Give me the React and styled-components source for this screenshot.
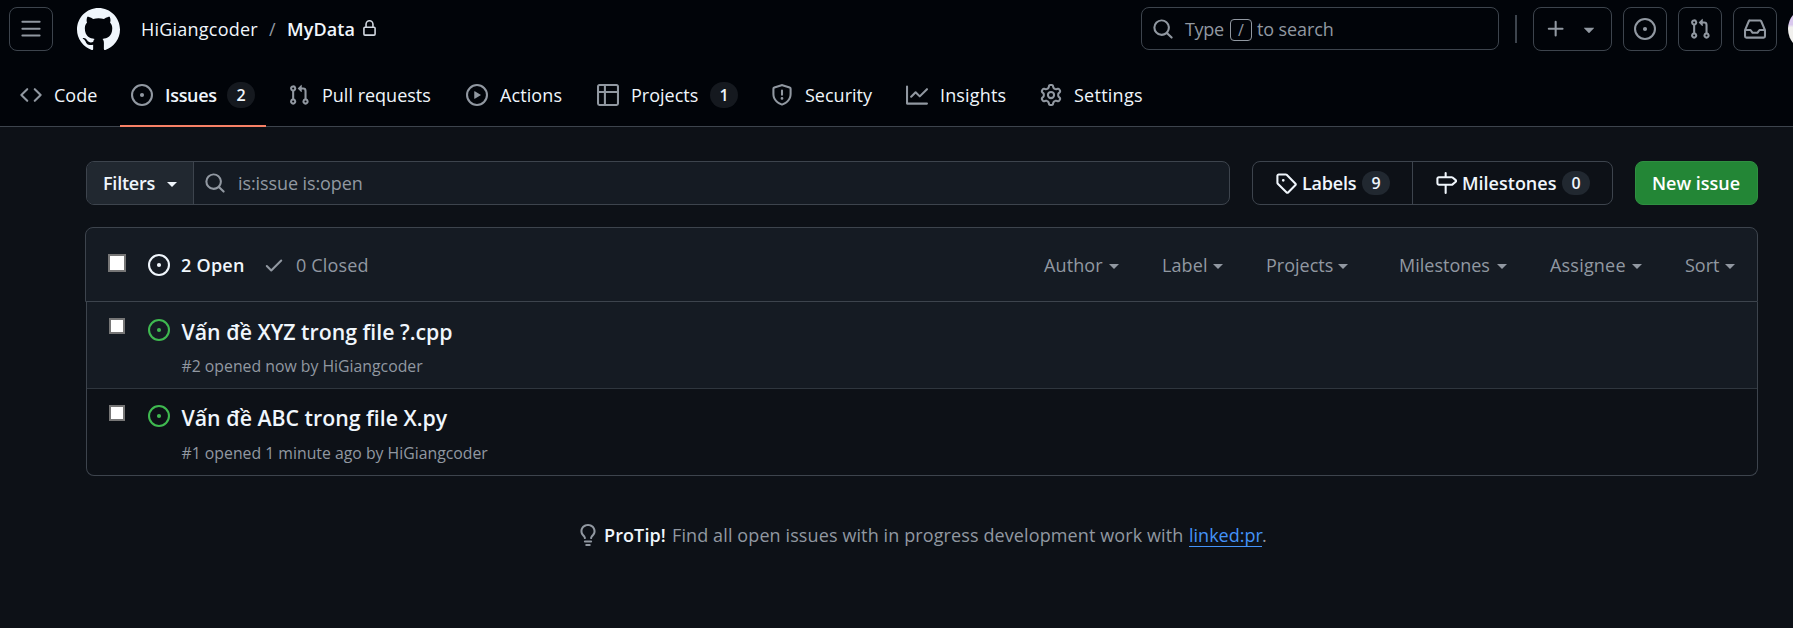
import React from 'react';
import styled, { createGlobalStyle, css } from 'styled-components';

const GlobalStyle = createGlobalStyle`
  *, *::before, *::after { box-sizing: border-box; }
  body {
    margin: 0;
    min-height: 100vh;
    overflow: hidden;
    background: #0d1117;
    color: #f0f6fc;
    font-family: "Open Sans", "Noto Sans", sans-serif;
    font-size: 18px;
    line-height: 28px;
  }
`;

const ICONS = {
  menu: 'M1 2.75A.75.75 0 0 1 1.75 2h12.5a.75.75 0 0 1 0 1.5H1.75A.75.75 0 0 1 1 2.75Zm0 5A.75.75 0 0 1 1.75 7h12.5a.75.75 0 0 1 0 1.5H1.75A.75.75 0 0 1 1 7.75ZM1.75 12h12.5a.75.75 0 0 1 0 1.5H1.75a.75.75 0 0 1 0-1.5Z',
  github: 'M8 0c4.42 0 8 3.58 8 8a8.013 8.013 0 0 1-5.45 7.59c-.4.08-.55-.17-.55-.38 0-.27.01-1.13.01-2.2 0-.75-.25-1.23-.54-1.48 1.78-.2 3.65-.88 3.65-3.95 0-.88-.31-1.59-.82-2.15.08-.2.36-1.02-.08-2.12 0 0-.67-.22-2.2.82-.64-.18-1.32-.27-2-.27-.68 0-1.36.09-2 .27-1.53-1.03-2.2-.82-2.2-.82-.44 1.1-.16 1.92-.08 2.12-.51.56-.82 1.28-.82 2.15 0 3.06 1.86 3.75 3.64 3.95-.23.2-.44.55-.51 1.07-.46.21-1.61.55-2.33-.66-.15-.24-.6-.83-1.23-.82-.67.01-.27.38.01.53.34.19.73.9.82 1.13.16.45.68 1.31 2.69.94 0 .67.01 1.3.01 1.49 0 .21-.15.45-.55.38A7.995 7.995 0 0 1 0 8c0-4.42 3.58-8 8-8Z',
  lock: 'M4 4a4 4 0 0 1 8 0v2h.25c.966 0 1.75.784 1.75 1.75v5.5A1.75 1.75 0 0 1 12.25 15h-8.5A1.75 1.75 0 0 1 2 13.25v-5.5C2 6.784 2.784 6 3.75 6H4Zm8.25 3.5h-8.5a.25.25 0 0 0-.25.25v5.5c0 .138.112.25.25.25h8.5a.25.25 0 0 0 .25-.25v-5.5a.25.25 0 0 0-.25-.25ZM10.5 6V4a2.5 2.5 0 1 0-5 0v2Z',
  code: 'm11.28 3.22 4.25 4.25a.75.75 0 0 1 0 1.06l-4.25 4.25a.749.749 0 0 1-1.275-.326.749.749 0 0 1 .215-.734L13.94 8l-3.72-3.72a.749.749 0 0 1 .326-1.275.749.749 0 0 1 .734.215Zm-6.56 0a.751.751 0 0 1 1.042.018.751.751 0 0 1 .018 1.042L2.06 8l3.72 3.72a.749.749 0 0 1-.326 1.275.749.749 0 0 1-.734-.215L.47 8.53a.75.75 0 0 1 0-1.06Z',
  issue: 'M8 9.5a1.5 1.5 0 1 0 0-3 1.5 1.5 0 0 0 0 3Z M8 0a8 8 0 1 1 0 16A8 8 0 0 1 8 0ZM1.5 8a6.5 6.5 0 1 0 13 0 6.5 6.5 0 0 0-13 0Z',
  pull: 'M1.5 3.25a2.25 2.25 0 1 1 3 2.122v5.256a2.251 2.251 0 1 1-1.5 0V5.372A2.25 2.25 0 0 1 1.5 3.25Zm5.677-.177L9.573.677A.25.25 0 0 1 10 .854V2.5h1A2.5 2.5 0 0 1 13.5 5v5.628a2.251 2.251 0 1 1-1.5 0V5a1 1 0 0 0-1-1h-1v1.646a.25.25 0 0 1-.427.177L7.177 3.427a.25.25 0 0 1 0-.354ZM3.75 2.5a.75.75 0 1 0 0 1.5.75.75 0 0 0 0-1.5Zm0 9.5a.75.75 0 1 0 0 1.5.75.75 0 0 0 0-1.5Zm8.25.75a.75.75 0 1 0 1.5 0 .75.75 0 0 0-1.5 0Z',
  play: 'M8 0a8 8 0 1 1 0 16A8 8 0 0 1 8 0ZM1.5 8a6.5 6.5 0 1 0 13 0 6.5 6.5 0 0 0-13 0Zm4.879-2.773 4.264 2.559a.25.25 0 0 1 0 .428l-4.264 2.559A.25.25 0 0 1 6 10.559V5.442a.25.25 0 0 1 .379-.215Z',
  table: 'M0 1.75C0 .784.784 0 1.75 0h12.5C15.216 0 16 .784 16 1.75v12.5A1.75 1.75 0 0 1 14.25 16H1.75A1.75 1.75 0 0 1 0 14.25ZM6.5 6.5v8h7.75a.25.25 0 0 0 .25-.25V6.5Zm8-1.5V1.75a.25.25 0 0 0-.25-.25H6.5V5Zm-13 1.5v7.75c0 .138.112.25.25.25H5v-8ZM5 5V1.5H1.75a.25.25 0 0 0-.25.25V5Z',
  shield: 'M7.467.133a1.748 1.748 0 0 1 1.066 0l5.25 1.68A1.75 1.75 0 0 1 15 3.48V7c0 1.566-.32 3.182-1.303 4.682-.983 1.498-2.585 2.813-5.032 3.855a1.697 1.697 0 0 1-1.33 0c-2.447-1.042-4.049-2.357-5.032-3.855C1.32 10.182 1 8.566 1 7V3.48a1.75 1.75 0 0 1 1.217-1.667Zm.61 1.429a.25.25 0 0 0-.153 0l-5.25 1.68a.25.25 0 0 0-.174.238V7c0 1.358.275 2.666 1.057 3.86.784 1.194 2.121 2.34 4.366 3.297a.196.196 0 0 0 .154 0c2.245-.956 3.582-2.104 4.366-3.298C13.225 9.666 13.5 8.36 13.5 7V3.48a.251.251 0 0 0-.174-.237l-5.25-1.68ZM8.75 4.75v3a.75.75 0 0 1-1.5 0v-3a.75.75 0 0 1 1.5 0ZM9 10.5a1 1 0 1 1-2 0 1 1 0 0 1 2 0Z',
  graph: 'M1.5 1.75V13.5h13.75a.75.75 0 0 1 0 1.5H.75a.75.75 0 0 1-.75-.75V1.75a.75.75 0 0 1 1.5 0Zm14.28 2.53-5.25 5.25a.75.75 0 0 1-1.06 0L7 7.06 4.28 9.78a.751.751 0 0 1-1.042-.018.751.751 0 0 1-.018-1.042l3.25-3.25a.75.75 0 0 1 1.06 0L10 7.94l4.72-4.72a.751.751 0 0 1 1.042.018.751.751 0 0 1 .018 1.042Z',
  gear: 'M8 0a8.2 8.2 0 0 1 .701.031C9.444.095 9.99.645 10.16 1.29l.288 1.107c.018.066.079.158.212.224.231.114.454.243.668.386.123.082.233.09.299.071l1.103-.303c.644-.176 1.392.021 1.82.63.27.385.506.792.704 1.218.315.675.111 1.422-.364 1.891l-.814.806c-.049.048-.098.147-.088.294.016.257.016.515 0 .772-.01.147.038.246.088.294l.814.806c.475.469.679 1.216.364 1.891a7.977 7.977 0 0 1-.704 1.217c-.428.61-1.176.807-1.82.63l-1.102-.302c-.067-.019-.177-.011-.3.071a5.909 5.909 0 0 1-.668.386c-.133.066-.194.158-.211.224l-.29 1.106c-.168.646-.715 1.196-1.458 1.26a8.006 8.006 0 0 1-1.402 0c-.743-.064-1.289-.614-1.458-1.26l-.289-1.106c-.018-.066-.079-.158-.212-.224a5.738 5.738 0 0 1-.668-.386c-.123-.082-.233-.09-.299-.071l-1.103.303c-.644.176-1.392-.021-1.82-.63a8.12 8.12 0 0 1-.704-1.218c-.315-.675-.111-1.422.363-1.891l.815-.806c.05-.048.098-.147.088-.294a6.214 6.214 0 0 1 0-.772c.01-.147-.038-.246-.088-.294l-.815-.806C.635 6.045.431 5.298.746 4.623a7.92 7.92 0 0 1 .704-1.217c.428-.61 1.176-.807 1.82-.63l1.102.302c.067.019.177.011.3-.071.214-.143.437-.272.668-.386.133-.066.194-.158.211-.224l.29-1.106C6.009.645 6.556.095 7.299.03 7.53.01 7.764 0 8 0Zm-.571 1.525c-.036.003-.108.036-.137.146l-.289 1.105c-.147.561-.549.967-.998 1.189-.173.086-.34.183-.5.29-.417.278-.97.423-1.529.27l-1.103-.303c-.109-.03-.175.016-.195.045-.22.312-.412.644-.573.99-.014.031-.021.11.059.19l.815.806c.411.406.562.957.53 1.456a4.709 4.709 0 0 0 0 .582c.032.499-.119 1.05-.53 1.456l-.815.806c-.081.08-.073.159-.059.19.162.346.353.677.573.989.02.03.085.076.195.046l1.102-.303c.56-.153 1.113-.008 1.53.27.161.107.328.204.501.29.447.222.85.629.997 1.189l.289 1.105c.029.109.101.143.137.146a6.6 6.6 0 0 0 1.142 0c.036-.003.108-.036.137-.146l.289-1.105c.147-.561.549-.967.998-1.189.173-.086.34-.183.5-.29.417-.278.97-.423 1.529-.27l1.103.303c.109.029.175-.016.195-.045.22-.313.411-.644.573-.99.014-.031.021-.11-.059-.19l-.815-.806c-.411-.406-.562-.957-.53-1.456a4.709 4.709 0 0 0 0-.582c-.032-.499.119-1.05.53-1.456l.815-.806c.081-.08.073-.159.059-.19a6.464 6.464 0 0 0-.573-.989c-.02-.03-.085-.076-.195-.046l-1.102.303c-.56.153-1.113.008-1.53-.27a4.44 4.44 0 0 0-.501-.29c-.447-.222-.85-.629-.997-1.189l-.289-1.105c-.029-.11-.101-.143-.137-.146a6.6 6.6 0 0 0-1.142 0ZM11 8a3 3 0 1 1-6 0 3 3 0 0 1 6 0ZM9.5 8a1.5 1.5 0 1 0-3.001.001A1.5 1.5 0 0 0 9.5 8Z',
  search: 'M10.68 11.74a6 6 0 0 1-7.922-8.982 6 6 0 0 1 8.982 7.922l3.04 3.04a.749.749 0 0 1-.326 1.275.749.749 0 0 1-.734-.215ZM11.5 7a4.499 4.499 0 1 0-8.997 0A4.499 4.499 0 0 0 11.5 7Z',
  plus: 'M7.75 2a.75.75 0 0 1 .75.75V7h4.25a.75.75 0 0 1 0 1.5H8.5v4.25a.75.75 0 0 1-1.5 0V8.5H2.75a.75.75 0 0 1 0-1.5H7V2.75A.75.75 0 0 1 7.75 2Z',
  triangle: 'm4.427 7.427 3.396 3.396a.25.25 0 0 0 .354 0l3.396-3.396A.25.25 0 0 0 11.396 7H4.604a.25.25 0 0 0-.177.427Z',
  inbox: 'M2.8 2.06A1.75 1.75 0 0 1 4.41 1h7.18c.7 0 1.333.417 1.61 1.06l2.74 6.395c.04.093.06.194.06.295v4.5A1.75 1.75 0 0 1 14.25 15H1.75A1.75 1.75 0 0 1 0 13.25v-4.5c0-.101.02-.202.06-.295Zm1.61.44a.25.25 0 0 0-.23.152L1.887 8H4.75a.75.75 0 0 1 .6.3L6.625 10h2.75l1.275-1.7a.75.75 0 0 1 .6-.3h2.863L11.82 2.652a.25.25 0 0 0-.23-.152Zm10.09 7h-2.875l-1.275 1.7a.75.75 0 0 1-.6.3h-3.5a.75.75 0 0 1-.6-.3L4.375 9.5H1.5v3.75c0 .138.112.25.25.25h12.5a.25.25 0 0 0 .25-.25Z',
  tag: 'M1 7.775V2.75C1 1.784 1.784 1 2.75 1h5.025c.464 0 .91.184 1.238.513l6.25 6.25a1.75 1.75 0 0 1 0 2.474l-5.026 5.026a1.75 1.75 0 0 1-2.474 0l-6.25-6.25A1.752 1.752 0 0 1 1 7.775Zm1.5 0c0 .066.026.13.073.177l6.25 6.25a.25.25 0 0 0 .354 0l5.025-5.025a.25.25 0 0 0 0-.354l-6.25-6.25a.25.25 0 0 0-.177-.073H2.75a.25.25 0 0 0-.25.25ZM6 5a1 1 0 1 1 0 2 1 1 0 0 1 0-2Z',
  milestone: 'M7.75 0a.75.75 0 0 1 .75.75V3h3.634c.414 0 .814.147 1.13.414l2.07 1.75a1.75 1.75 0 0 1 0 2.672l-2.07 1.75a1.75 1.75 0 0 1-1.13.414H8.5v5.25a.75.75 0 0 1-1.5 0V10H2.75A1.75 1.75 0 0 1 1 8.25v-3.5C1 3.784 1.784 3 2.75 3H7V.75A.75.75 0 0 1 7.75 0Zm4.384 8.5a.25.25 0 0 0 .161-.06l2.07-1.75a.248.248 0 0 0 0-.38l-2.07-1.75a.25.25 0 0 0-.161-.06H2.75a.25.25 0 0 0-.25.25v3.5c0 .138.112.25.25.25h9.384Z',
  check: 'M13.78 4.22a.75.75 0 0 1 0 1.06l-7.25 7.25a.75.75 0 0 1-1.06 0L2.22 9.28a.751.751 0 0 1 .018-1.042.751.751 0 0 1 1.042-.018L6 10.94l6.72-6.72a.75.75 0 0 1 1.06 0Z',
  bulb: 'M8 1.5c-2.363 0-4 1.69-4 3.75 0 .984.424 1.625.984 2.304l.214.253c.223.264.47.556.673.848.284.411.537.896.621 1.49a.75.75 0 0 1-1.484.211c-.04-.282-.163-.547-.37-.847a8.456 8.456 0 0 0-.542-.68c-.084-.1-.173-.205-.268-.32C3.201 7.75 2.5 6.766 2.5 5.25 2.5 2.31 4.863 0 8 0s5.5 2.31 5.5 5.25c0 1.516-.701 2.5-1.328 3.259-.095.115-.184.22-.268.319-.207.245-.383.453-.541.681-.208.3-.33.565-.37.847a.751.751 0 0 1-1.485-.212c.084-.593.337-1.078.621-1.489.203-.292.45-.584.673-.848.075-.088.147-.173.213-.253.561-.679.985-1.32.985-2.304 0-2.06-1.637-3.75-4-3.75ZM5.75 12h4.5a.75.75 0 0 1 0 1.5h-4.5a.75.75 0 0 1 0-1.5ZM6 15.25a.75.75 0 0 1 .75-.75h2.5a.75.75 0 0 1 0 1.5h-2.5a.75.75 0 0 1-.75-.75Z',
};

const Svg = styled.svg`
  display: block;
  flex: none;
  width: ${(p) => p.$size}px;
  height: ${(p) => p.$size}px;
  fill: ${(p) => p.$color};
`;

const Icon = ({ name, size = 22, color = '#9198a1', className }) => (
  <Svg viewBox="0 0 16 16" $size={size} $color={color} className={className} aria-hidden="true">
    <path fillRule="evenodd" d={ICONS[name]} />
  </Svg>
);

/* Text run with a fixed measure, so that neighbours keep their place */
const Label = styled.span`
  display: block;
  flex: none;
  width: ${(p) => p.$w}px;
  text-align: left;
  white-space: nowrap;
  letter-spacing: ${(p) => p.$track || 0}px;
  font-weight: ${(p) => (p.$bold ? 600 : 400)};
`;

const Header = styled.header`
  height: 127px;
  background: #010409;
  overflow: hidden;
`;

const TopBar = styled.div`
  display: flex;
  align-items: center;
  height: 44px;
  margin-top: 7px;
  padding-left: 9px;
`;

const SquareButton = styled.button`
  display: flex;
  flex: none;
  align-items: center;
  justify-content: center;
  width: 44px;
  height: 44px;
  padding: 0;
  background: transparent;
  border: 1px solid #3d444d;
  border-radius: 8px;
`;

const Logo = styled(Icon)`
  margin: 0 21px 0 24px;
`;

const Crumbs = styled.nav`
  display: flex;
  flex: 1;
  align-items: center;
`;

const Slash = styled.span`
  width: 29px;
  padding-left: 11px;
  color: #9198a1;
`;

const LockIcon = styled(Icon)`
  margin: 0 0 1px 6px;
`;

const SearchBox = styled.div`
  display: flex;
  flex: none;
  align-items: center;
  width: 358px;
  height: 43px;
  margin-bottom: 1px;
  padding-left: 10px;
  border: 1px solid #3d444d;
  border-radius: 8px;
  color: #9198a1;

  ${Label} { margin-left: 11px; }
  kbd + ${Label} { margin-left: 5px; }
`;

const Key = styled.kbd`
  display: flex;
  align-items: center;
  justify-content: center;
  width: 22px;
  height: 22px;
  margin-left: 6px;
  margin-top: 2px;
  border: 1px solid #9198a1;
  border-radius: 4px;
  font: 16px/20px "Open Sans", sans-serif;
`;

const Divider = styled.span`
  flex: none;
  width: 2px;
  height: 28px;
  margin: 0 16px;
  background: #3d444d;
`;

const HeaderActions = styled.div`
  display: flex;
  flex: none;
  align-items: center;
  gap: 11px;
  width: 260px;
`;

const CreateButton = styled(SquareButton)`
  width: 79px;
  gap: 11px;
`;

const Avatar = styled.span`
  flex: none;
  width: 44px;
  height: 44px;
  border-radius: 50%;
  background: linear-gradient(#d9c8ee 40%, #f1f0ee 46%);
`;

const RepoTabs = styled.nav`
  display: flex;
  gap: 11px;
  height: 76px;
  padding-left: 9px;
  border-bottom: 1px solid #3d444d;
`;

const Tab = styled.a`
  display: flex;
  position: relative;
  align-items: center;
  height: 64px;
  margin-top: 12px;
  padding: 0 11px;
  gap: 12px;

  ${(p) => p.$active && css`
    &::after {
      content: "";
      position: absolute;
      right: 0;
      bottom: 0;
      left: 0;
      height: 2px;
      background: #f78166;
    }
  `}
`;

const Counter = styled.span`
  display: flex;
  flex: none;
  align-items: center;
  justify-content: center;
  width: ${(p) => p.$w}px;
  height: ${(p) => (p.$small ? 24 : 26)}px;
  border-radius: 13px;
  background: ${(p) => (p.$small ? '#212830' : '#15191f')};
  font-size: 16px;
  line-height: 24px;
  font-weight: 600;
`;

const Main = styled.main`
  width: 1673px;
  margin-left: 85px;
  padding-top: 34px;
`;

const Toolbar = styled.div`
  display: flex;
  height: 44px;
  padding-left: 1px;
`;

const FilterBar = styled.div`
  display: flex;
  flex: none;
  width: 1144px;
  border: 1px solid #3d444d;
  border-radius: 8px;
  background: #151b23;
  overflow: hidden;
`;

const FilterButton = styled.button`
  display: flex;
  align-items: center;
  width: 107px;
  padding: 0 0 0 16px;
  border: 0;
  border-right: 1px solid #3d444d;
  background: #212830;
  color: #f0f6fc;
  font: inherit;
`;

const Caret = styled.span`
  flex: none;
  width: 0;
  height: 0;
  margin-top: ${(p) => p.$drop || 0}px;
  border: 5.5px solid transparent;
  border-top-color: currentColor;
  border-bottom: 0;
`;

const Query = styled.div`
  display: flex;
  align-items: center;
  gap: 12px;
  padding-left: 10px;
  color: #9198a1;
`;

const ButtonGroup = styled.div`
  display: flex;
  width: 361px;
  margin: 0 22px;
  border: 1px solid #3d444d;
  border-radius: 8px;
`;

const GroupLink = styled.a`
  display: flex;
  flex: ${(p) => (p.$grow ? 1 : 'none')};
  align-items: center;
  gap: 5px;
  width: 159px;
  padding-left: 22px;

  & + & { border-left: 1px solid #3d444d; }
`;

const NewIssue = styled.button`
  display: flex;
  flex: none;
  align-items: center;
  width: 123px;
  height: 44px;
  padding: 0 0 0 16px;
  border: 1px solid #2f8f41;
  border-radius: 8px;
  background: #238636;
  color: #fff;
  font: inherit;
`;

const ListHeader = styled.div`
  display: flex;
  align-items: center;
  height: 75px;
  margin-top: 22px;
  padding: 1px 22px 0 22px;
  border: 1px solid #3d444d;
  border-radius: 8px 8px 0 0;
  background: #151b23;
  color: #9198a1;
`;

const Checkbox = styled.span`
  flex: none;
  width: ${(p) => p.$size}px;
  height: ${(p) => p.$size}px;
  border: 2px solid #767676;
  background: #fff;
`;

const HeaderCheckbox = styled(Checkbox)`
  margin: -4px 22px 0 0;
`;

const StateLink = styled.a`
  display: flex;
  align-items: center;
  gap: ${(p) => p.$gap}px;
  margin-right: 19px;
  color: ${(p) => (p.$active ? '#f0f6fc' : '#9198a1')};
`;

const Menus = styled.div`
  display: flex;
  margin-left: auto;
`;

const MenuItem = styled.span`
  display: flex;
  align-items: center;
  gap: 5px;
  margin-left: ${(p) => p.$before}px;
`;

const Rows = styled.div`
  margin-left: 1px;
  border: 1px solid #3d444d;
  border-top: 0;
  border-radius: 0 0 8px 8px;
  overflow: hidden;
`;

const Row = styled.article`
  display: flex;
  align-items: flex-start;
  height: 87px;
  padding: 17px 0 0 22px;
  background: ${(p) => (p.$hover ? '#151b23' : 'transparent')};

  & + & { height: 86px; padding-top: 16px; }
  &:first-child { border-bottom: 1px solid #2f363e; }
`;

const RowCheckbox = styled(Checkbox)`
  margin: -1px 23px 0 0;

  ${Row} + ${Row} & { margin-top: 0; }
`;

const RowText = styled.div`
  margin-left: 11.5px;
`;

const Title = styled.h3`
  margin: 0;
  font-size: 21.3px;
  line-height: 26px;
  font-weight: 600;
  white-space: nowrap;
`;

const Meta = styled.p`
  margin: 9px 0 0;
  color: #9198a1;
  font-size: 15.8px;
  line-height: 24px;
  white-space: nowrap;

  ${Row} + ${Row} & { margin-top: 10px; }
`;

const ProTip = styled.footer`
  display: flex;
  align-items: center;
  margin: 45px 0 0 492px;
  color: #9198a1;

  ${Label} { margin-left: 5px; }
`;

const Strong = styled(Label)`
  color: #f0f6fc;
`;

const TipLink = styled.a`
  display: block;
  width: 73px;
  height: 24px;
  margin-left: 6px;
  color: #4493f8;
  border-bottom: 1px solid #4493f8;
  line-height: 24px;
  white-space: nowrap;
`;

const TABS = [
  { icon: 'code', text: 'Code', w: 44 },
  { icon: 'issue', text: 'Issues', w: 50, track: -0.3, count: 2, active: true },
  { icon: 'pull', text: 'Pull requests', w: 111 },
  { icon: 'play', text: 'Actions', w: 64, track: 0.1 },
  { icon: 'table', text: 'Projects', w: 67, count: 1 },
  { icon: 'shield', text: 'Security', w: 68 },
  { icon: 'graph', text: 'Insights', w: 67, track: 0.15 },
  { icon: 'gear', text: 'Settings', w: 69, track: 0.25 },
];

const MENUS = [
  { text: 'Author', w: 60, before: 0, track: 0.12 },
  { text: 'Label', w: 46, before: 43, track: 0.1 },
  { text: 'Projects', w: 67, before: 43 },
  { text: 'Milestones', w: 93, before: 51 },
  { text: 'Assignee', w: 77, before: 43, track: 0.2 },
  { text: 'Sort', w: 35, before: 43 },
];

const ISSUES = [
  { title: 'Vấn đề XYZ trong file ?.cpp', meta: '#2 opened now by HiGiangcoder', hover: true },
  { title: 'Vấn đề ABC trong file X.py', meta: '#1 opened 1 minute ago by HiGiangcoder' },
];

export default function App() {
  return (
    <>
      <GlobalStyle />
      <Header>
        <TopBar>
          <SquareButton aria-label="Menu"><Icon name="menu" /></SquareButton>
          <Logo name="github" size={43} color="#f0f6fc" />
          <Crumbs>
            <Label $w={117} $track={0.22}>HiGiangcoder</Label>
            <Slash>/</Slash>
            <Label $w={68} $track={0.1} $bold>MyData</Label>
            <LockIcon name="lock" size={17} color="#d1d7e0" />
          </Crumbs>
          <SearchBox>
            <Icon name="search" />
            <Label $w={39} $track={-0.3}>Type</Label>
            <Key>/</Key>
            <Label $w={76} $track={-0.1}>to search</Label>
          </SearchBox>
          <Divider />
          <HeaderActions>
            <CreateButton aria-label="Create new">
              <Icon name="plus" />
              <Icon name="triangle" />
            </CreateButton>
            <SquareButton aria-label="Issues"><Icon name="issue" /></SquareButton>
            <SquareButton aria-label="Pull requests"><Icon name="pull" /></SquareButton>
            <SquareButton aria-label="Inbox"><Icon name="inbox" /></SquareButton>
            <Avatar />
          </HeaderActions>
        </TopBar>
        <RepoTabs>
          {TABS.map((t) => (
            <Tab key={t.text} $active={t.active}>
              <Icon name={t.icon} />
              <Label $w={t.w} $track={t.track} $bold={t.active}>{t.text}</Label>
              {t.count && <Counter $w={28}>{t.count}</Counter>}
            </Tab>
          ))}
        </RepoTabs>
      </Header>
      <Main>
        <Toolbar>
          <FilterBar>
            <FilterButton>
              <Label $w={64} $track={-0.22} $bold>Filters</Label>
              <Caret $drop={3} />
            </FilterButton>
            <Query>
              <Icon name="search" />
              <Label $w={124} $track={-0.1}>is:issue is:open</Label>
            </Query>
          </FilterBar>
          <ButtonGroup>
            <GroupLink>
              <Icon name="tag" color="#f0f6fc" />
              <Label $w={55} $track={-0.2} $bold>Labels</Label>
              <Counter $w={28} $small>9</Counter>
            </GroupLink>
            <GroupLink $grow>
              <Icon name="milestone" color="#f0f6fc" />
              <Label $w={95} $bold>Milestones</Label>
              <Counter $w={28} $small>0</Counter>
            </GroupLink>
          </ButtonGroup>
          <NewIssue><Label $w={88} $bold>New issue</Label></NewIssue>
        </Toolbar>
        <ListHeader>
          <HeaderCheckbox $size={18} />
          <StateLink $active $gap={11}>
            <Icon name="issue" color="#f0f6fc" />
            <Label $w={63} $track={0.25} $bold>2 Open</Label>
          </StateLink>
          <StateLink $gap={11}>
            <Icon name="check" />
            <Label $w={72} $track={0.18}>0 Closed</Label>
          </StateLink>
          <Menus>
            {MENUS.map((m) => (
              <MenuItem key={m.text} $before={m.before}>
                <Label $w={m.w} $track={m.track}>{m.text}</Label>
                <Caret $drop={3} />
              </MenuItem>
            ))}
          </Menus>
        </ListHeader>
        <Rows>
          {ISSUES.map((i) => (
            <Row key={i.title} $hover={i.hover}>
              <RowCheckbox $size={16} />
              <Icon name="issue" color="#3fb950" />
              <RowText>
                <Title>{i.title}</Title>
                <Meta>{i.meta}</Meta>
              </RowText>
            </Row>
          ))}
        </Rows>
        <ProTip>
          <Icon name="bulb" />
          <Strong $w={63} $track={0.1} $bold>ProTip!</Strong>
          <Label $w={511} $track={0.11}>Find all open issues with in progress development work with</Label>
          <TipLink>linked:pr</TipLink>.
        </ProTip>
      </Main>
    </>
  );
}
